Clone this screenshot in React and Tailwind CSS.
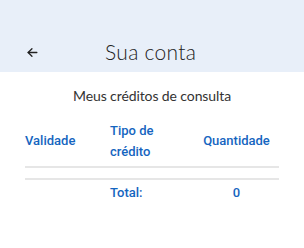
import React from 'react';

function BackArrow() {
  return (
    <svg width="13" height="13" viewBox="0 0 24 24" fill="none" stroke="#222" strokeWidth="2.4" strokeLinecap="round" strokeLinejoin="round">
      <path d="M20 12H4" />
      <path d="M11 5l-7 7 7 7" />
    </svg>
  );
}

export default function App() {
  return (
    <div className="w-[304px] h-[248px] bg-white font-['Lato',sans-serif]">
      <div className="h-[72px] bg-[#e8eff9] flex items-end pb-[8px]">
        <button className="w-[64px] h-[24px] flex items-center pl-[26px]">
          <BackArrow />
        </button>
        <h1 className="ml-[41px] text-[21px] leading-[24px] font-light text-[#222] tracking-[0.3px]">Sua conta</h1>
      </div>

      <p className="mt-[15px] text-center text-[14px] leading-[18px] text-[#333] tracking-[-0.1px]">Meus créditos de consulta</p>

      <div className="mx-[25px] mt-[11px] font-['Roboto',sans-serif] font-medium text-[13px] text-[#1565c0]">
        <div className="grid grid-cols-[85px_84px_1fr] items-center h-[52px] border-b-2 border-[#e6e6e6]">
          <span>Validade</span>
          <span className="leading-[21px]">Tipo de<br />crédito</span>
          <span className="text-center">Quantidade</span>
        </div>
        <div className="h-[12px] border-b-2 border-[#e6e6e6]"></div>
        <div className="grid grid-cols-[85px_84px_1fr] items-center h-[26px]">
          <span></span>
          <span>Total:</span>
          <span className="text-center">0</span>
        </div>
      </div>
    </div>
  );
}
